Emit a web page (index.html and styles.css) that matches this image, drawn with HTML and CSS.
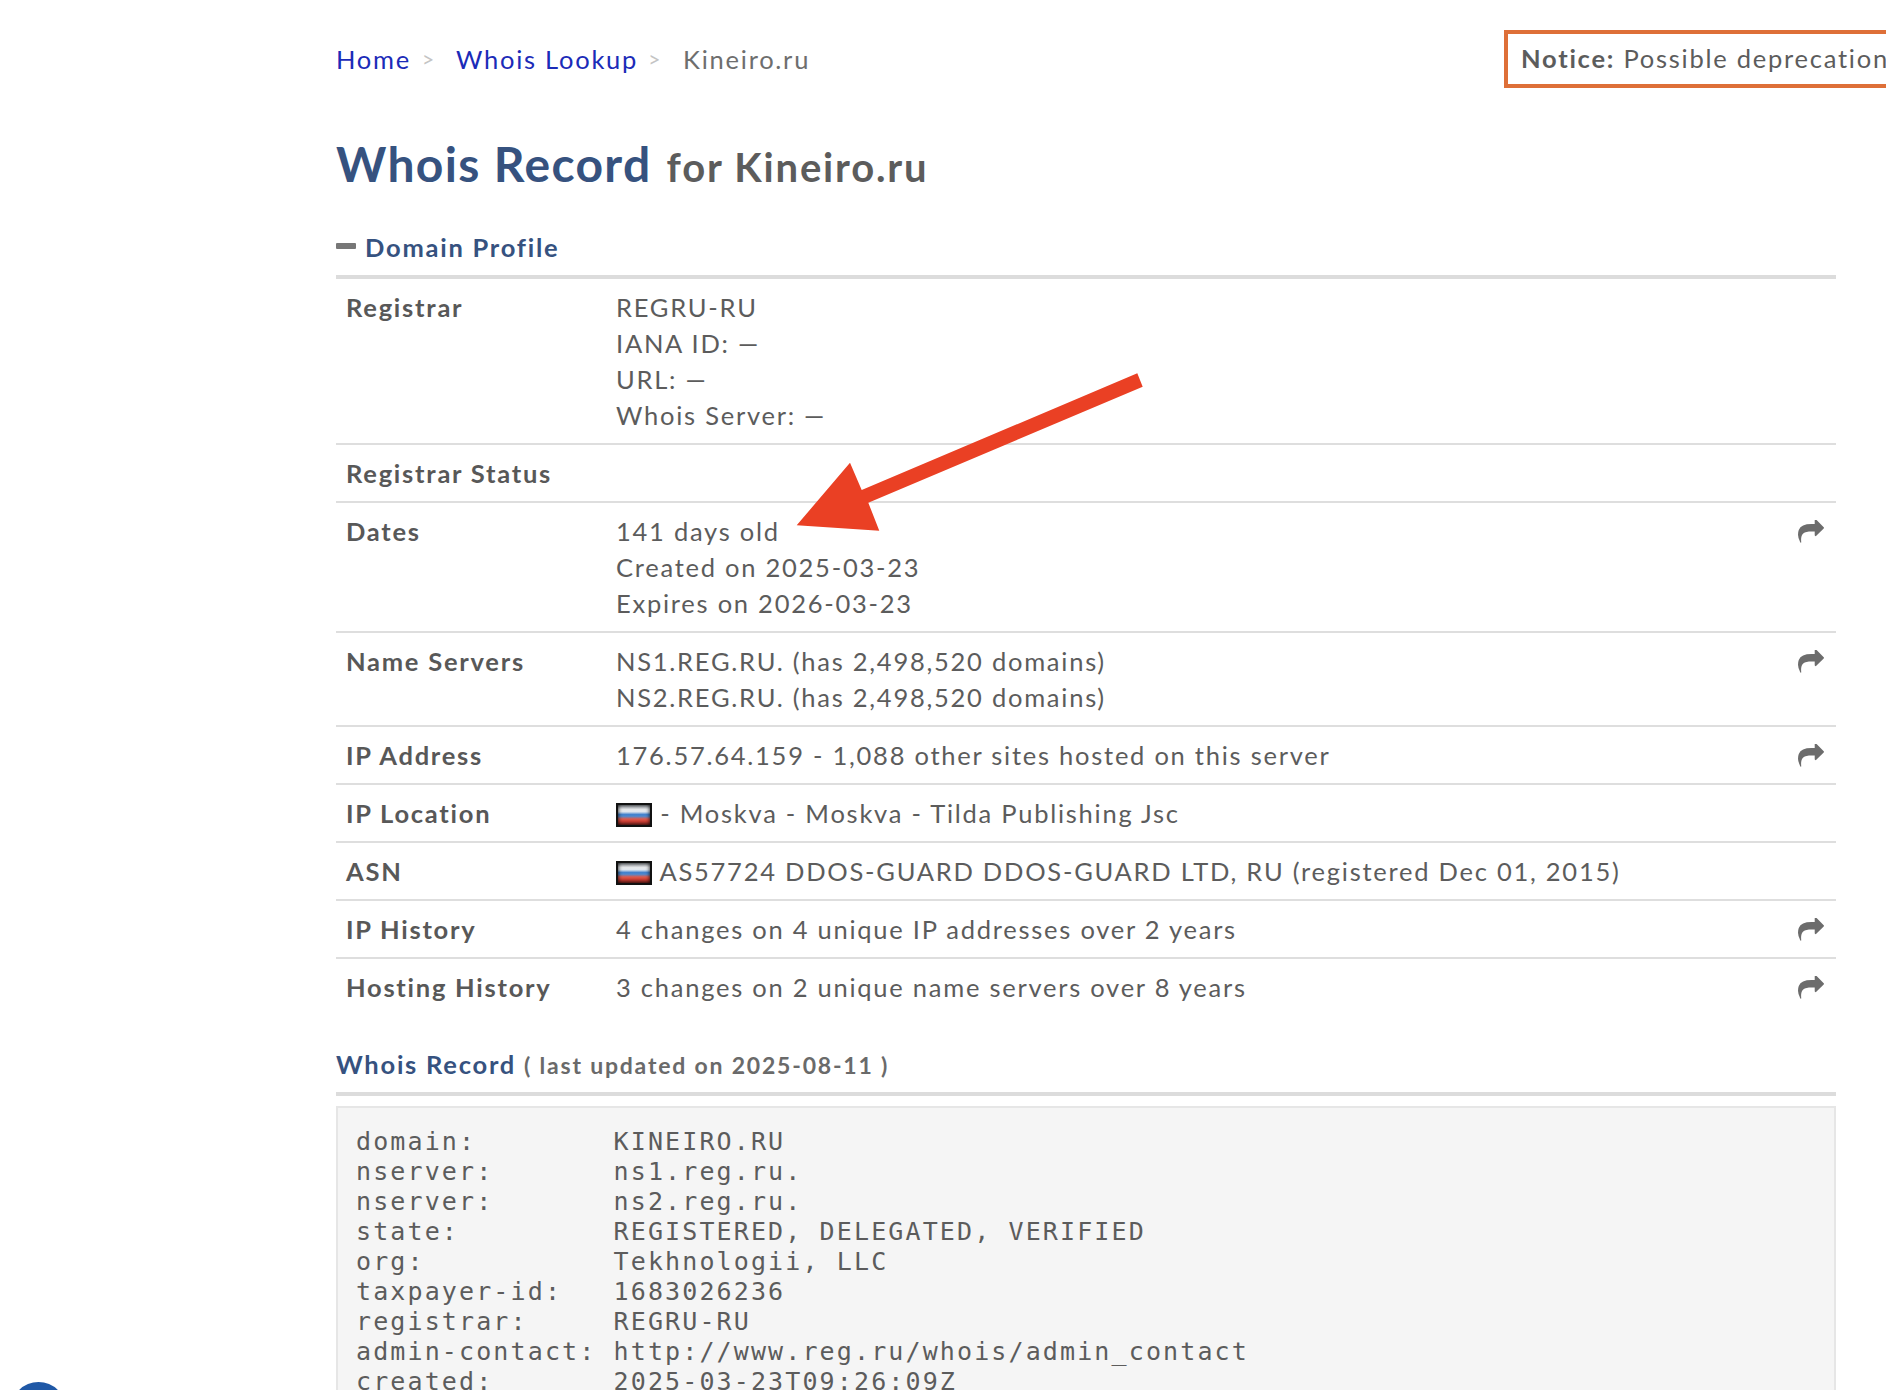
FILE: index.html
```html
<!DOCTYPE html>
<html lang="en">
<head>
<meta charset="utf-8">
<title>Whois Record for Kineiro.ru</title>
<link rel="stylesheet" href="styles.css">
</head>
<body>
<svg width="0" height="0" class="defs"><defs>
<symbol id="share" viewBox="0 128 1792 1536"><path d="M1792 640q0 26-19 45l-512 512q-19 19-45 19t-45-19-19-45v-256h-224q-98 0-175.5 6t-154 21.5-133 42.5-105.5 69.5-80 101-48.5 138.5-17.5 181q0 55 5 123 0 6 2.5 23.5t2.5 26.5q0 15-8.5 25t-23.5 10q-16 0-28-17-7-9-13-22t-13.5-30-10.5-24q-127-285-127-451 0-199 53-333 162-403 875-403h224v-256q0-26 19-45t45-19 45 19l512 512q19 19 19 45z"/></symbol>
</defs></svg>
<main class="page">
  <div class="top">
    <nav class="crumbs">
      <a href="#">Home</a><span class="sep">&gt;</span><a href="#">Whois Lookup</a><span class="sep sep-second">&gt;</span><span class="current">Kineiro.ru</span>
    </nav>
    <div class="notice"><b>Notice:</b> Possible deprecation</div>
  </div>
  <h1 class="title"><span class="title-main">Whois Record</span> <small class="title-sub">for Kineiro.ru</small></h1>
  <h2 class="section-head"><span class="dash"></span>Domain Profile</h2>
  <div class="row">
    <div class="label">Registrar</div>
    <div class="value">REGRU-RU<br>IANA ID: —<br>URL: —<br>Whois Server: —</div>
  </div>
  <div class="row">
    <div class="label">Registrar Status</div>
    <div class="value"></div>
  </div>
  <div class="row">
    <div class="label">Dates</div>
    <div class="value">141 days old<br>Created on 2025-03-23<br>Expires on 2026-03-23</div>
    <svg class="share"><use href="#share"/></svg>
  </div>
  <div class="row">
    <div class="label">Name Servers</div>
    <div class="value">NS1.REG.RU. (has 2,498,520 domains)<br>NS2.REG.RU. (has 2,498,520 domains)</div>
    <svg class="share"><use href="#share"/></svg>
  </div>
  <div class="row">
    <div class="label">IP Address</div>
    <div class="value">176.57.64.159 - 1,088 other sites hosted on this server</div>
    <svg class="share"><use href="#share"/></svg>
  </div>
  <div class="row">
    <div class="label">IP Location</div>
    <div class="value"><span class="flag"></span> - Moskva - Moskva - Tilda Publishing Jsc</div>
  </div>
  <div class="row">
    <div class="label">ASN</div>
    <div class="value"><span class="flag"></span> AS57724 DDOS-GUARD DDOS-GUARD LTD, RU (registered Dec 01, 2015)</div>
  </div>
  <div class="row">
    <div class="label">IP History</div>
    <div class="value">4 changes on 4 unique IP addresses over 2 years</div>
    <svg class="share"><use href="#share"/></svg>
  </div>
  <div class="row row-last">
    <div class="label">Hosting History</div>
    <div class="value">3 changes on 2 unique name servers over 8 years</div>
    <svg class="share"><use href="#share"/></svg>
  </div>
  <h2 class="record-head"><span class="record-main">Whois Record</span> <small class="record-sub">( last updated on 2025-08-11 )</small></h2>
  <pre class="raw">domain:        KINEIRO.RU
nserver:       ns1.reg.ru.
nserver:       ns2.reg.ru.
state:         REGISTERED, DELEGATED, VERIFIED
org:           Tekhnologii, LLC
taxpayer-id:   1683026236
registrar:     REGRU-RU
admin-contact: http://www.reg.ru/whois/admin_contact
created:       2025-03-23T09:26:09Z</pre>
</main>
<svg class="arrow" viewBox="0 0 360 180"><polygon points="347.3,8.3 352.7,21.7 78.3,137.7 89.3,165.7 6.7,160.3 60,97.7 71.7,125"/></svg>
<div class="chat"></div>
</body>
</html>
```
FILE: styles.css
```css
html, body {
  margin: 0;
  padding: 0;
  height: 1390px;
  overflow: hidden;
  background: #fff;
}
body {
  font-family: Lato, "Open Sans", sans-serif;
  font-size: 25.5px;
  line-height: 36px;
  letter-spacing: 1.75px;
  color: #5c5c5c;
  position: relative;
}
.defs { position: absolute; }
.page {
  width: 1500px;
  margin-left: 336px;
  padding-top: 30px;
}
.top {
  display: flex;
  align-items: center;
  height: 58px;
}
.crumbs {
  flex: 0 0 1168px;
  display: flex;
  align-items: center;
}
.crumbs a { color: #1b2bb8; text-decoration: none; }
.sep { color: #c4c4c4; margin: 0 20px 0 11px; font-size: 21px; }
.sep-second { margin: 0 21px 0 10px; }
.current { color: #6e6e6e; }
.notice {
  flex: 0 0 auto;
  white-space: nowrap;
  border: 4px solid #de6f38;
  padding: 0 13px;
  height: 50px;
  line-height: 48px;
}
.title {
  margin: 46px 0 0;
  height: 60px;
  font-size: 48px;
  line-height: 60px;
  font-weight: 700;
  letter-spacing: 1.35px;
}
.title-main { color: #36527f; }
.title-sub { font-size: 40px; letter-spacing: 1.8px; color: #5c5c5c; margin-left: 2px; }
.section-head {
  margin: 35px 0 0;
  font-size: 25.5px;
  line-height: 36px;
  font-weight: 700;
  color: #36527f;
  padding-bottom: 10px;
  border-bottom: 4px solid #dcdcdc;
  display: flex;
  align-items: center;
}
.dash {
  width: 20px;
  height: 6px;
  background: #777;
  border-radius: 1px;
  margin-right: 9px;
  position: relative;
  top: -1px;
}
.row {
  display: flex;
  align-items: flex-start;
  padding: 10px 12px 10px 10px;
  border-bottom: 2px solid #dedede;
  min-height: 36px;
}
.row-last { border-bottom: 0; padding-bottom: 12px; }
.label {
  flex: 0 0 270px;
  font-weight: 700;
  color: #585858;
}
.value { flex: 1; }
.share {
  width: 26px;
  height: 23px;
  fill: #6c6c6c;
  margin-top: 7px;
  flex: none;
}
.flag {
  display: inline-block;
  width: 36px;
  height: 24px;
  box-sizing: border-box;
  vertical-align: -4px;
  border: 2px solid #111;
  background: linear-gradient(#9fa5ac 0, #e8eaec 22%, #dfe6ee 34%, #3f7fcb 48%, #4d8ad0 56%, #dd5a4c 70%, #cf3f34 82%, #8e2a24 100%);
  box-shadow: inset 0 0 4px #000;
}
.record-head {
  margin: 29px 0 0;
  height: 36px;
  font-size: 25.5px;
  line-height: 36px;
  padding-bottom: 10px;
  border-bottom: 4px solid #dcdcdc;
  font-weight: 700;
}
.record-main { color: #36527f; }
.record-sub { font-size: 23px; letter-spacing: 1.8px; color: #6a6a6a; }
.raw {
  margin: 10px 0 0;
  border: 2px solid #e6e6e6;
  background: #f5f5f5;
  padding: 19px 18px 18px;
  font-family: "DejaVu Sans Mono", "Liberation Mono", monospace;
  font-size: 25px;
  line-height: 30px;
  letter-spacing: 2.12px;
  color: #5c5c5c;
  overflow: hidden;
}
.arrow {
  position: absolute;
  left: 790px;
  top: 365px;
  width: 360px;
  height: 180px;
  fill: #ea4024;
}
.chat {
  position: absolute;
  left: 11px;
  top: 1382px;
  width: 55px;
  height: 55px;
  border-radius: 50%;
  background: #1f58a6;
}
```
